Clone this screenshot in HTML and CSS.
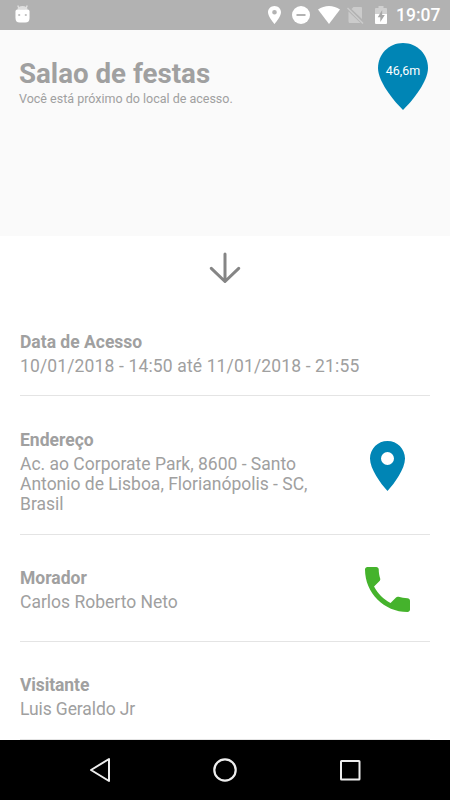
FILE: index.html
```
<!DOCTYPE html>
<html lang="pt-BR">
<head>
  <meta charset="UTF-8">
  <title>Salao de festas</title>
  <link rel="stylesheet" href="styles.css">
</head>
<body>
  <!-- Android status bar -->
  <div class="status-bar">
    <svg class="debug-icon" width="15" height="18" viewBox="0 0 16 18" preserveAspectRatio="none">
      <path d="M3 .5l1.500 4M13 .5l-1.500 4" stroke="#e4e4e4" stroke-width="1.300"/>
      <path d="M2.500 4.500a5.500 3.600 0 0 1 11 0z" fill="#dedede"/>
      <path d="M.5 6.500Q.5 4.500 2.500 4.500h11q2 0 2 2V13q0 4.500-4.500 4.500H5Q.5 17.500.5 13z" fill="#fff"/>
      <path d="M3.500 9h2v2h-2zM10.500 9h2v2h-2z" fill="#c4c4c4"/>
    </svg>
    <div class="status-icons">
      <svg width="13" height="18" viewBox="5 2 14 20" preserveAspectRatio="none">
        <path fill="#fff" fill-rule="evenodd" d="M12 2C8.130 2 5 5.130 5 9c0 5.250 7 13 7 13s7-7.750 7-13c0-3.870-3.130-7-7-7zm0 9.500a2.500 2.500 0 1 1 0-5 2.500 2.500 0 0 1 0 5z"/>
      </svg>
      <svg width="18" height="18" viewBox="0 0 18 18">
        <circle cx="9" cy="9" r="9" fill="#fff"/>
        <rect x="4.500" y="8" width="9" height="2" fill="#b2b2b2"/>
      </svg>
      <svg width="22" height="18" viewBox="0 0 22 18">
        <path fill="#fff" d="M0 3.500C6.500-1.200 15.500-1.200 22 3.500L11 18z"/>
      </svg>
      <svg width="17" height="18" viewBox="0 0 17 18">
        <path fill="#cbcbcb" d="M6.500 1H14q1 0 1 1v11L4.500 3zM1.500 5.500L13.500 17H3q-1.500 0-1.500-1.500z"/>
        <path stroke="#cbcbcb" stroke-width="1.500" d="M.5 2L16 17.500"/>
      </svg>
      <svg width="12" height="18" viewBox="0 0 12 18">
        <path fill="#d0d0d0" d="M0 3q0-1 1-1h2.500V0h5v2H11q1 0 1 1v5H0z"/>
        <path fill="#fff" d="M0 8h12v9q0 1-1 1H1q-1 0-1-1z"/>
        <path fill="#a8a8a8" d="M7.200 4L2.700 11.300h2.600V16L9.800 9H7.200z"/>
      </svg>
    </div>
    <span class="clock">19:07</span>
  </div>

  <div class="header">
    <div class="header-text">
      <h1>Salao de festas</h1>
      <p>Você está próximo do local de acesso.</p>
    </div>
    <!-- Distance to the access point -->
    <div class="distance">
      <svg width="50" height="67" viewBox="0 0 50 67">
        <path fill="#0085b5" d="M25 0C11 0 0 11 0 25c0 13 14 31 25 42 11-11 25-29 25-42C50 11 39 0 25 0z"/>
      </svg>
      <span>46,6m</span>
    </div>
  </div>

  <div class="details">
    <svg class="arrow" width="32" height="32" viewBox="0 0 32 32">
      <path fill="none" stroke="#858585" stroke-width="3" stroke-linecap="round" stroke-linejoin="round" d="M16 2v27M2.300 16.300L16 29.500l13.700-13.200"/>
    </svg>

    <div class="row">
      <div class="info">
        <h2>Data de Acesso</h2>
        <p class="dates">10/01/2018 - 14:50 até 11/01/2018 - 21:55</p>
      </div>
    </div>
    <div class="row row-address">
      <div class="info">
        <h2>Endereço</h2>
        <p>Ac. ao Corporate Park, 8600 - Santo Antonio de Lisboa, Florianópolis - SC, Brasil</p>
      </div>
      <div class="action">
        <svg width="35" height="50" viewBox="5 2 14 20">
          <path fill="#0085b5" fill-rule="evenodd" d="M12 2C8.130 2 5 5.130 5 9c0 4.200 4.200 9.900 7 13 2.800-3.100 7-8.800 7-13 0-3.870-3.130-7-7-7zm0 9.600a2.600 2.600 0 1 1 0-5.200 2.600 2.600 0 0 1 0 5.200z"/>
        </svg>
      </div>
    </div>
    <div class="row row-resident">
      <div class="info">
        <h2>Morador</h2>
        <p>Carlos Roberto Neto</p>
      </div>
      <div class="action">
        <svg width="45" height="45" viewBox="3 3 18 18">
          <path fill="#45b32c" d="M6.620 10.790c1.440 2.830 3.760 5.140 6.590 6.590l2.200-2.200c.27-.27.67-.36 1.020-.24 1.120.37 2.330.57 3.570.57.55 0 1 .45 1 1V20c0 .55-.45 1-1 1-9.390 0-17-7.610-17-17 0-.55.45-1 1-1h3.500c.55 0 1 .45 1 1 0 1.250.2 2.450.57 3.570.11.35.03.74-.25 1.020l-2.200 2.200z"/>
        </svg>
      </div>
    </div>
    <div class="row row-visitor">
      <div class="info">
        <h2>Visitante</h2>
        <p>Luis Geraldo Jr</p>
      </div>
    </div>
  </div>

  <!-- Android navigation bar -->
  <div class="nav-bar">
    <svg width="24" height="26" viewBox="0 0 24 26">
      <path fill="none" stroke="#eee" stroke-width="2" stroke-linejoin="round" d="M20 2v22L2 13z"/>
    </svg>
    <svg width="24" height="24" viewBox="0 0 24 24">
      <circle cx="11" cy="12" r="10.700" fill="none" stroke="#eee" stroke-width="2.200"/>
    </svg>
    <svg width="24" height="24" viewBox="0 0 24 24">
      <rect x="3" y="3" width="18.500" height="18.500" rx=".5" fill="none" stroke="#eee" stroke-width="2"/>
    </svg>
  </div>
</body>
</html>
```
FILE: styles.css
```
html, body {
  margin: 0;
  padding: 0;
  height: 100%;
  overflow: hidden;
}
body {
  display: flex;
  flex-direction: column;
  background: #fff;
  color: #a0a0a0;
  font-family: Roboto, "Liberation Sans", sans-serif;
}
h1, h2, p {
  margin: 0;
}
svg {
  display: block;
  overflow: visible;
}

/* Status bar */
.status-bar {
  display: flex;
  align-items: center;
  flex: none;
  height: 30px;
  padding: 0 11px 0 15px;
  box-sizing: border-box;
  background: #b2b2b2;
}
.debug-icon {
  margin-right: auto;
  margin-top: -2px;
}
.status-icons {
  display: flex;
  gap: 11px;
}
.status-icons svg:nth-child(3) {
  margin-left: -3px;
}
.status-icons svg:nth-child(4) {
  margin-left: -4px;
}
.clock {
  width: 43px;
  margin-left: 9px;
  color: #fff;
  font-size: 17.5px;
  font-weight: 500;
  line-height: 32px;
  white-space: nowrap;
}

/* Header */
.header {
  display: flex;
  justify-content: space-between;
  flex: none;
  height: 206px;
  padding: 13px 22px 0 19px;
  box-sizing: border-box;
  background: #fafafa;
}
.header-text {
  padding-top: 14px;
}
h1 {
  font-size: 27.7px;
  font-weight: 700;
  line-height: 34px;
}
.header-text p {
  font-size: 12.5px;
  line-height: 15px;
}
.distance {
  position: relative;
  width: 50px;
  height: 67px;
}
.distance span {
  position: absolute;
  top: 20px;
  left: 0;
  width: 100%;
  color: #fff;
  font-size: 12.5px;
  line-height: 15px;
  text-align: center;
}

/* Access details */
.details {
  flex: 1;
  min-height: 0;
  padding: 0 20px;
  overflow: hidden;
}
.arrow {
  margin: 16px auto 14px;
}
.row {
  display: flex;
  justify-content: space-between;
  height: 98px;
  padding-top: 34px;
  box-sizing: border-box;
  border-bottom: 1px solid #e4e4e4;
}
.row-address {
  height: 139px;
}
.row-resident {
  height: 107px;
  padding-top: 33px;
}
.row-visitor {
  padding-top: 33px;
}
h2 {
  margin-bottom: 4px;
  font-size: 17.5px;
  font-weight: 700;
  line-height: 20px;
}
.info {
  width: 300px;
}
.info p {
  font-size: 17.5px;
  line-height: 20px;
}
.info .dates {
  letter-spacing: 0.14px;
  white-space: nowrap;
}
.row-visitor h2,
.row-visitor p {
  letter-spacing: -0.1px;
}
.action {
  display: flex;
  justify-content: center;
  width: 85px;
  padding-top: 11px;
}
.row-resident .action {
  padding-top: 0;
  margin-top: -1px;
}

/* Navigation bar */
.nav-bar {
  display: flex;
  align-items: center;
  justify-content: space-between;
  flex: none;
  height: 60px;
  padding: 0 88px 0 89px;
  box-sizing: border-box;
  background: #000;
}
```
